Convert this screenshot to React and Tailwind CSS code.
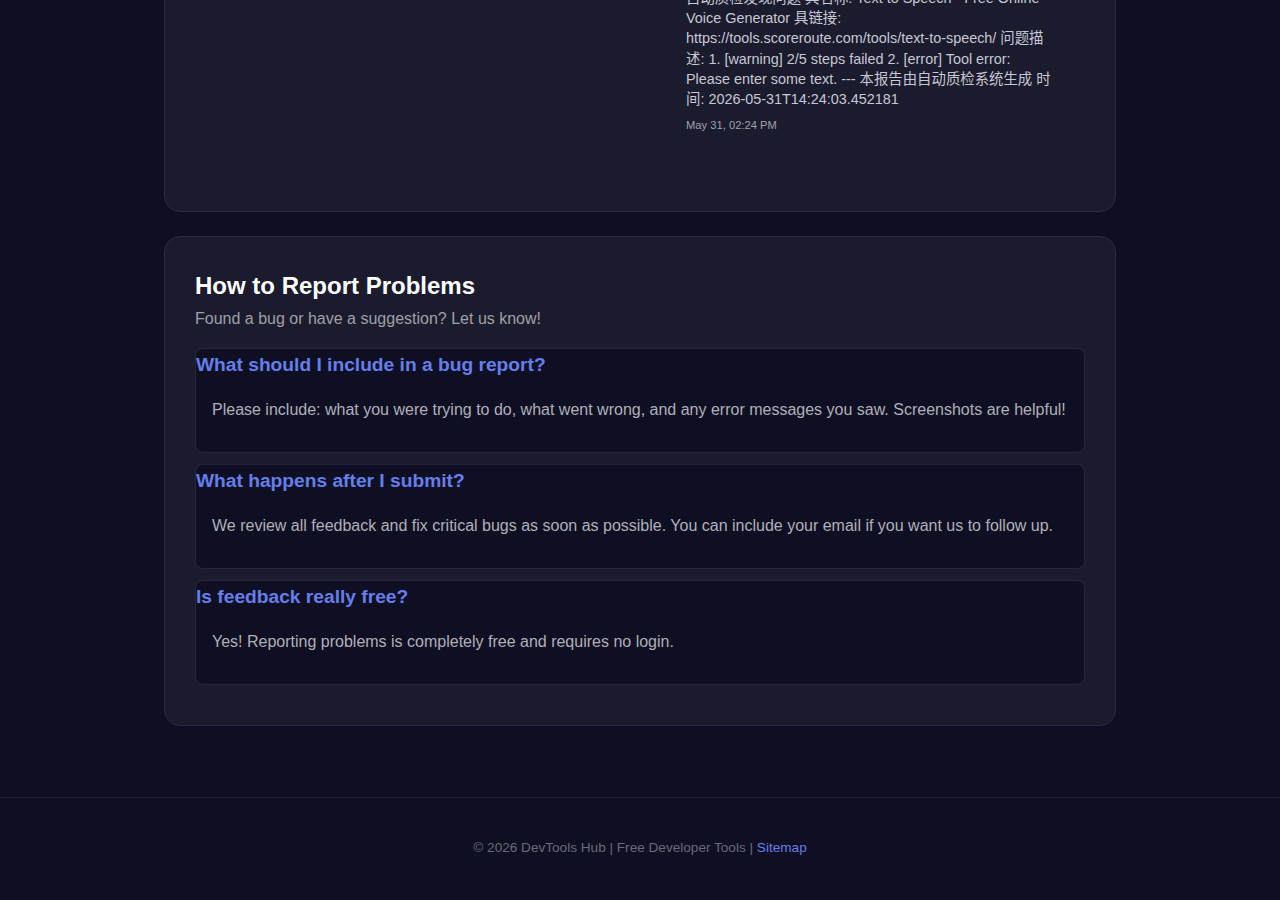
import React from "react";

const faqs = [
  {
    q: "What should I include in a bug report?",
    a: "Please include: what you were trying to do, what went wrong, and any error messages you saw. Screenshots are helpful!",
  },
  {
    q: "What happens after I submit?",
    a: "We review all feedback and fix critical bugs as soon as possible. You can include your email if you want us to follow up.",
  },
  {
    q: "Is feedback really free?",
    a: "Yes! Reporting problems is completely free and requires no login.",
  },
];

export default function App() {
  return (
    <div
      className="min-h-[900px] bg-[#0f0f23] overflow-hidden"
      style={{ fontFamily: '"Liberation Sans", Arial, "Noto Sans CJK SC", sans-serif' }}
    >
      <main className="w-[952px] mx-auto -mt-[43px]">
        {/* recent reports card (scrolled) */}
        <section className="rounded-2xl border border-[#2a2a48] bg-[#1b1b2e] px-[30px] pt-[30px] pb-[79px]">
          <div className="flex">
            <div className="w-[491px] shrink-0" />
            <div className="w-[368px]">
              <p className="text-[14.4px] leading-[20.2px] text-[#c8c8d4]">
                自动质检发现问题 具名称: Text to Speech - Free Online Voice Generator 具链接:
                https://tools.scoreroute.com/tools/text-to-speech/ 问题描述: 1. [warning] 2/5 steps
                failed 2. [error] Tool error: Please enter some text. --- 本报告由自动质检系统生成 时间:
                2026-05-31T14:24:03.452181
              </p>
              <div className="mt-[10px] text-[11.2px] leading-[13px] text-[#a0a0b0]">May 31, 02:24 PM</div>
            </div>
          </div>
        </section>

        {/* how to report */}
        <section className="mt-6 rounded-2xl border border-[#2a2a48] bg-[#1b1b2e] px-[30px] pt-[33px] pb-[30px]">
          <h2 className="text-[24px] leading-[32px] font-bold text-white">How to Report Problems</h2>
          <p className="mt-[5px] text-[16px] leading-[24px] text-[#a0a0a8]">
            Found a bug or have a suggestion? Let us know!
          </p>
          <div className="mt-[17px] flex flex-col gap-[11px] pb-[10px]">
            {faqs.map((f) => (
              <div key={f.q} className="rounded-lg border border-[#25253f] bg-[#0f0f23]">
                <h3 className="text-[19.2px] leading-[31px] font-bold text-[#667eea]">{f.q}</h3>
                <p className="px-4 pt-[17px] pb-[29px] text-[16px] leading-[26px] text-[#b0b0b8]">{f.a}</p>
              </div>
            ))}
          </div>
        </section>
      </main>

      <footer className="mt-[71px] border-t border-[#1f1f36] pt-[40px] pb-[40px] text-center text-[13.6px] leading-[20px] text-[#6a6a78]">
        © 2026 DevTools Hub | Free Developer Tools |{" "}
        <a href="#" className="text-[#667eea]">
          Sitemap
        </a>
      </footer>
    </div>
  );
}
